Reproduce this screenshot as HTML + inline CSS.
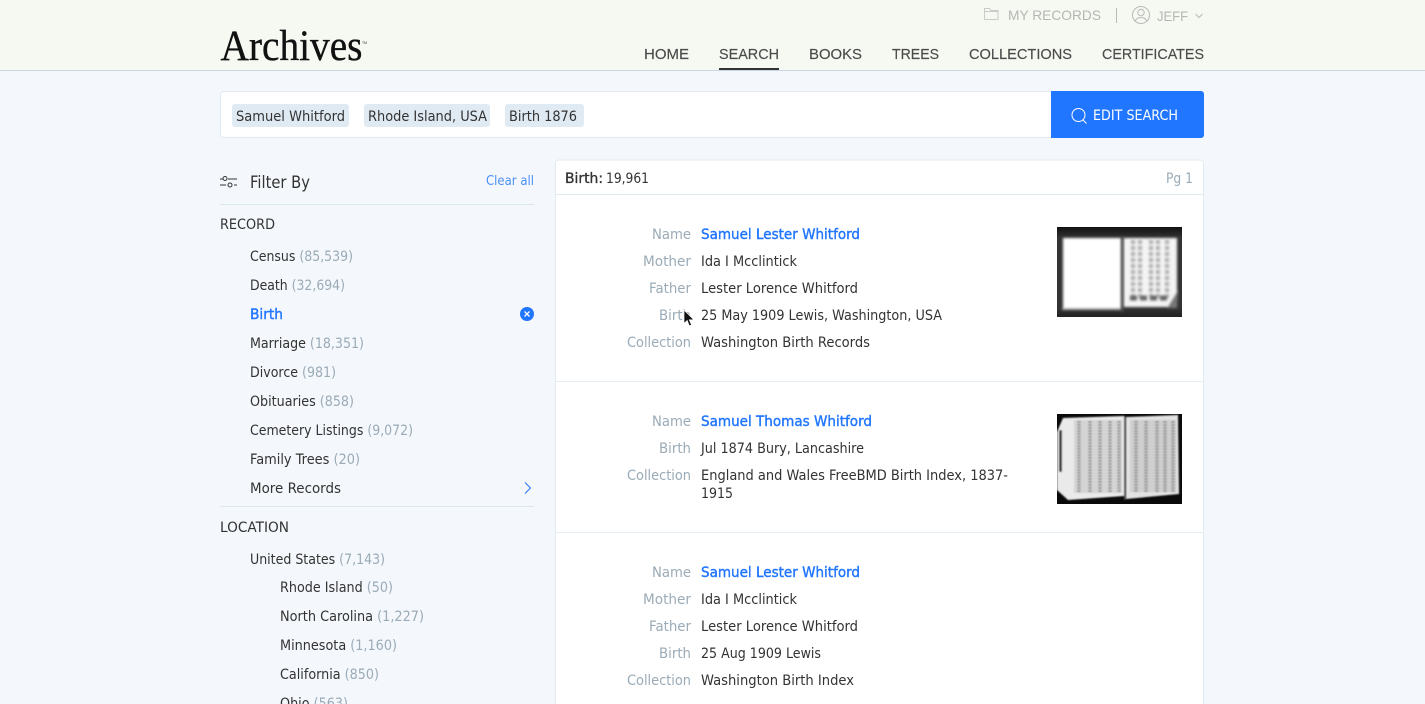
<!DOCTYPE html>
<html><head><meta charset="utf-8"><title>Archives</title>
<style>
html,body{margin:0;padding:0;background:#f4f7fb;overflow:hidden;width:1425px;height:704px}
svg{display:block}
text{font-family:"DejaVu Sans","Liberation Sans",sans-serif;font-size:14.4px;fill:#333;}
.n{font-family:"Liberation Sans",sans-serif;font-size:15px;fill:#4a4a4a;stroke:#4a4a4a;stroke-width:.15px}
.g{fill:#9aabb7}
.b{fill:#2176ff;stroke:#2176ff;stroke-width:.4px}
</style></head><body>
<svg width="1425" height="704" viewBox="0 0 1425 704" xmlns="http://www.w3.org/2000/svg">
<defs>
<filter id="bl" x="-5%" y="-5%" width="110%" height="110%"><feGaussianBlur stdDeviation="1.2"/></filter>
<filter id="bs" x="-5%" y="-5%" width="110%" height="110%"><feGaussianBlur stdDeviation=".7"/></filter>
<linearGradient id="tg" x1="0" y1="0" x2="0" y2="1"><stop offset="0" stop-color="#111"/><stop offset=".12" stop-color="#333"/><stop offset=".9" stop-color="#333"/><stop offset="1" stop-color="#222"/></linearGradient>
<clipPath id="c1"><rect x="1057" y="227" width="125" height="90"/></clipPath>
<clipPath id="c2"><rect x="1057" y="414" width="125" height="90"/></clipPath>
</defs>
<rect width="1425" height="704" fill="#f4f7fb"/>
<!-- header -->
<rect width="1425" height="70" fill="#f6f8f2"/>
<rect y="70" width="1425" height="1" fill="#c9d6e4"/>
<text x="220.500" y="60" style="font-family:'Liberation Serif',serif;font-size:43px;fill:#111;stroke:#111;stroke-width:.35px" textLength="142" lengthAdjust="spacingAndGlyphs">Archives</text>
<text x="362" y="44" style="font-family:'Liberation Sans',sans-serif;font-size:4px;fill:#333" textLength="5" lengthAdjust="spacingAndGlyphs">TM</text>
<path d="M984.500 19.500V8.500h5l1.500 2h7v9zM984.500 11.500h13" fill="none" stroke="#c9cbc8" stroke-width="1"/>
<text class="n" x="1008" y="20" style="font-size:14px;fill:#b4b7b4;stroke:none" textLength="93" lengthAdjust="spacingAndGlyphs">MY RECORDS</text>
<rect x="1116" y="8" width="1" height="15" fill="#b8bbb8"/>
<circle cx="1141" cy="15" r="8.500" fill="none" stroke="#b8bbb8" stroke-width="1"/>
<circle cx="1141" cy="12.500" r="3.200" fill="none" stroke="#b8bbb8" stroke-width="1"/>
<path d="M1135 21.500c1-3 3-4 6-4s5 1 6 4" fill="none" stroke="#b8bbb8" stroke-width="1"/>
<text class="n" x="1157" y="21" style="font-size:14px;fill:#b4b7b4;stroke:none" textLength="31" lengthAdjust="spacingAndGlyphs">JEFF</text>
<path d="M1195.500 14l3.500 3.500 3.500-3.500" fill="none" stroke="#b8bbb8" stroke-width="1"/>
<text class="n" x="644" y="59" textLength="45" lengthAdjust="spacingAndGlyphs">HOME</text>
<text class="n" x="719" y="59" textLength="60" lengthAdjust="spacingAndGlyphs">SEARCH</text>
<rect x="719" y="68" width="60" height="2" fill="#333"/>
<text class="n" x="809" y="59" textLength="53" lengthAdjust="spacingAndGlyphs">BOOKS</text>
<text class="n" x="892" y="59" textLength="47" lengthAdjust="spacingAndGlyphs">TREES</text>
<text class="n" x="969" y="59" textLength="103" lengthAdjust="spacingAndGlyphs">COLLECTIONS</text>
<text class="n" x="1102" y="59" textLength="102" lengthAdjust="spacingAndGlyphs">CERTIFICATES</text>
<!-- search -->
<rect x="220.500" y="91.500" width="840" height="46" rx="3" fill="#fff" stroke="#e2ebf2"/>
<path d="M1051 91h150a3 3 0 0 1 3 3v41a3 3 0 0 1-3 3h-150z" fill="#2176ff"/>
<rect x="232" y="104" width="117" height="23" rx="3" fill="#e0eaf3"/>
<rect x="364" y="104" width="126" height="23" rx="3" fill="#e0eaf3"/>
<rect x="505" y="104" width="79" height="23" rx="3" fill="#e0eaf3"/>
<text x="236" y="121" textLength="109" lengthAdjust="spacingAndGlyphs">Samuel Whitford</text>
<text x="368" y="121" textLength="119" lengthAdjust="spacingAndGlyphs">Rhode Island, USA</text>
<text x="509" y="121" textLength="68" lengthAdjust="spacingAndGlyphs">Birth 1876</text>
<circle cx="1078.500" cy="115" r="6.500" fill="none" stroke="#fff" stroke-width="1"/>
<path d="M1083 120l3.500 3.500" stroke="#fff" stroke-width="1"/>
<text x="1093" y="120" style="fill:#fff" textLength="85" lengthAdjust="spacingAndGlyphs">EDIT SEARCH</text>
<!-- sidebar -->
<path d="M220 179h3M228 179h9M220 185h6M234 185h3" stroke="#333" stroke-width="1"/>
<circle cx="225" cy="178.500" r="2" fill="none" stroke="#333"/>
<circle cx="230" cy="185" r="2" fill="none" stroke="#333"/>
<text x="250" y="188" style="font-size:16.500px" textLength="60" lengthAdjust="spacingAndGlyphs">Filter By</text>
<text x="486" y="185" style="font-size:13.500px;fill:#4a90f5" textLength="48" lengthAdjust="spacingAndGlyphs">Clear all</text>
<rect x="220" y="204" width="314" height="1" fill="#dbe9ef"/>
<text x="220" y="229" textLength="55" lengthAdjust="spacingAndGlyphs">RECORD</text>
<text x="250" y="261" textLength="103" lengthAdjust="spacingAndGlyphs">Census <tspan class="g">(85,539)</tspan></text>
<text x="250" y="290" textLength="95" lengthAdjust="spacingAndGlyphs">Death <tspan class="g">(32,694)</tspan></text>
<text class="b" x="250" y="319" textLength="33" lengthAdjust="spacingAndGlyphs">Birth</text>
<circle cx="527" cy="314" r="7" fill="#2176ff"/>
<path d="M524.500 311.500l5 5M529.500 311.500l-5 5" stroke="#fff" stroke-width="1.300"/>
<text x="250" y="348" textLength="114" lengthAdjust="spacingAndGlyphs">Marriage <tspan class="g">(18,351)</tspan></text>
<text x="250" y="377" textLength="86" lengthAdjust="spacingAndGlyphs">Divorce <tspan class="g">(981)</tspan></text>
<text x="250" y="406" textLength="104" lengthAdjust="spacingAndGlyphs">Obituaries <tspan class="g">(858)</tspan></text>
<text x="250" y="435" textLength="163" lengthAdjust="spacingAndGlyphs">Cemetery Listings <tspan class="g">(9,072)</tspan></text>
<text x="250" y="464" textLength="110" lengthAdjust="spacingAndGlyphs">Family Trees <tspan class="g">(20)</tspan></text>
<text x="250" y="493" textLength="91" lengthAdjust="spacingAndGlyphs">More Records</text>
<path d="M525 482.500l5.500 5.500-5.500 5.500" fill="none" stroke="#2176ff" stroke-width="1"/>
<rect x="220" y="506" width="314" height="1" fill="#dbe9ef"/>
<text x="220" y="532" textLength="69" lengthAdjust="spacingAndGlyphs">LOCATION</text>
<text x="250" y="564" textLength="135" lengthAdjust="spacingAndGlyphs">United States <tspan class="g">(7,143)</tspan></text>
<text x="280" y="592" textLength="113" lengthAdjust="spacingAndGlyphs">Rhode Island <tspan class="g">(50)</tspan></text>
<text x="280" y="621" textLength="144" lengthAdjust="spacingAndGlyphs">North Carolina <tspan class="g">(1,227)</tspan></text>
<text x="280" y="650" textLength="117" lengthAdjust="spacingAndGlyphs">Minnesota <tspan class="g">(1,160)</tspan></text>
<text x="280" y="679" textLength="99" lengthAdjust="spacingAndGlyphs">California <tspan class="g">(850)</tspan></text>
<text x="280" y="708" textLength="68" lengthAdjust="spacingAndGlyphs">Ohio <tspan class="g">(563)</tspan></text>
<!-- results -->
<path d="M555.500 710V163a3 3 0 0 1 3-3h642a3 3 0 0 1 3 3V710z" fill="#fff" stroke="#e2ebf2"/>
<rect x="556" y="194" width="647" height="1" fill="#dfeaf1"/>
<rect x="556" y="381" width="647" height="1" fill="#e6edf2"/>
<rect x="556" y="532" width="647" height="1" fill="#e6edf2"/>
<text x="565" y="183" style="stroke:#333;stroke-width:.35px" textLength="38" lengthAdjust="spacingAndGlyphs">Birth:</text>
<text x="606" y="183" textLength="43" lengthAdjust="spacingAndGlyphs">19,961</text>
<text class="g" x="1166" y="183" textLength="27" lengthAdjust="spacingAndGlyphs">Pg 1</text>

<text x="652" y="239" class="g" textLength="39" lengthAdjust="spacingAndGlyphs">Name</text>
<text x="643" y="266" class="g" textLength="48" lengthAdjust="spacingAndGlyphs">Mother</text>
<text x="649" y="293" class="g" textLength="42" lengthAdjust="spacingAndGlyphs">Father</text>
<text x="659" y="320" class="g" textLength="32" lengthAdjust="spacingAndGlyphs">Birth</text>
<text x="627" y="347" class="g" textLength="64" lengthAdjust="spacingAndGlyphs">Collection</text>
<text class="b" x="701" y="239" textLength="159" lengthAdjust="spacingAndGlyphs">Samuel Lester Whitford</text>
<text x="701" y="266" textLength="96" lengthAdjust="spacingAndGlyphs">Ida I Mcclintick</text>
<text x="701" y="293" textLength="157" lengthAdjust="spacingAndGlyphs">Lester Lorence Whitford</text>
<text x="701" y="320" textLength="241" lengthAdjust="spacingAndGlyphs">25 May 1909 Lewis, Washington, USA</text>
<text x="701" y="347" textLength="169" lengthAdjust="spacingAndGlyphs">Washington Birth Records</text>

<text x="652" y="426" class="g" textLength="39" lengthAdjust="spacingAndGlyphs">Name</text>
<text x="659" y="453" class="g" textLength="32" lengthAdjust="spacingAndGlyphs">Birth</text>
<text x="627" y="480" class="g" textLength="64" lengthAdjust="spacingAndGlyphs">Collection</text>
<text class="b" x="701" y="426" textLength="171" lengthAdjust="spacingAndGlyphs">Samuel Thomas Whitford</text>
<text x="701" y="453" textLength="163" lengthAdjust="spacingAndGlyphs">Jul 1874 Bury, Lancashire</text>
<text x="701" y="480" textLength="307" lengthAdjust="spacingAndGlyphs">England and Wales FreeBMD Birth Index, 1837-</text>
<text x="701" y="498" textLength="32" lengthAdjust="spacingAndGlyphs">1915</text>

<text x="652" y="577" class="g" textLength="39" lengthAdjust="spacingAndGlyphs">Name</text>
<text x="643" y="604" class="g" textLength="48" lengthAdjust="spacingAndGlyphs">Mother</text>
<text x="649" y="631" class="g" textLength="42" lengthAdjust="spacingAndGlyphs">Father</text>
<text x="659" y="658" class="g" textLength="32" lengthAdjust="spacingAndGlyphs">Birth</text>
<text x="627" y="685" class="g" textLength="64" lengthAdjust="spacingAndGlyphs">Collection</text>
<text class="b" x="701" y="577" textLength="159" lengthAdjust="spacingAndGlyphs">Samuel Lester Whitford</text>
<text x="701" y="604" textLength="96" lengthAdjust="spacingAndGlyphs">Ida I Mcclintick</text>
<text x="701" y="631" textLength="157" lengthAdjust="spacingAndGlyphs">Lester Lorence Whitford</text>
<text x="701" y="658" textLength="120" lengthAdjust="spacingAndGlyphs">25 Aug 1909 Lewis</text>
<text x="701" y="685" textLength="153" lengthAdjust="spacingAndGlyphs">Washington Birth Index</text>

<!-- thumb 1 -->
<g clip-path="url(#c1)">
<rect x="1057" y="227" width="125" height="90" fill="url(#tg)"/>
<g filter="url(#bl)">
<rect x="1063" y="238" width="59" height="70" fill="#fff"/>
<rect x="1123" y="238" width="54" height="69" fill="#f4f4f4"/>
<path d="M1178 290l-1 18h-10z" fill="#777"/>
<path d="M1062 308h60v2h-60z" fill="#aaa"/>
</g>
<g filter="url(#bl)">
<rect x="1121" y="236" width="2.500" height="76" fill="#444"/>
<path d="M1133 240v60M1140 240v60M1151 240v60M1158 240v60M1167 240v60" stroke="#aaa" stroke-width="4" stroke-dasharray="4 2"/>
<path d="M1130 298h40" stroke="#666" stroke-width="5" stroke-dasharray="7 3"/>
</g>
</g>
<!-- thumb 2 -->
<g clip-path="url(#c2)">
<rect x="1057" y="414" width="125" height="90" fill="#0a0a0a"/>
<g filter="url(#bs)">
<path d="M1057 432l6-14 61-2v80l-56 4-11-10z" fill="#eaeaea"/>
<path d="M1126 417l52-2 1 79-53 5z" fill="#e2e2e2"/>
<rect x="1059" y="430" width="3" height="42" rx="1" fill="#333"/>
<path d="M1074 420h48v73h-48z" fill="#d4d4d4"/>
<path d="M1130 420h46v72h-46z" fill="#cfcfcf"/>
<path d="M1079 421v72M1090 421v72M1100 421v72M1110 421v72M1119 421v72M1136 421v72M1146 421v72M1157 421v72M1165 421v72M1173 421v72" stroke="#999" stroke-width="3.500" stroke-dasharray="2 1"/>
<rect x="1124" y="416" width="1.300" height="84" fill="#555"/>
</g>
</g>
<!-- cursor -->
<path d="M684 310v13.500l3.200-3 2.100 5.400 2.200-1-2.200-5.100h4.500z" fill="#111" stroke="#fff" stroke-width=".7"/>
</svg>
</body></html>
